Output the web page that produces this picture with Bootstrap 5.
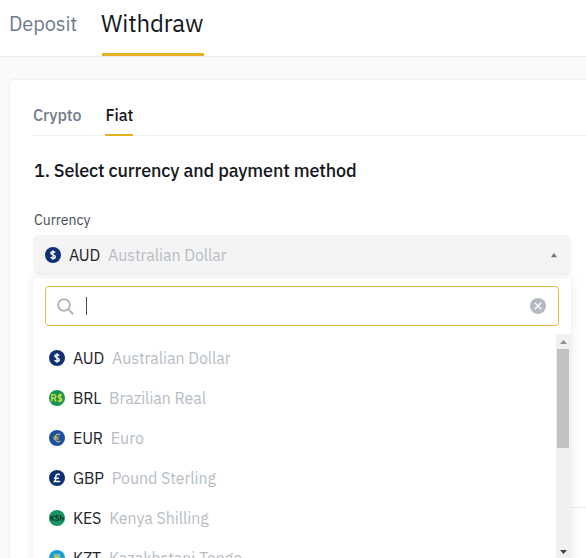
<!DOCTYPE html>
<html lang="en">
<head>
<meta charset="utf-8">
<meta name="viewport" content="width=device-width, initial-scale=1">
<title>Withdraw</title>
<link href="https://cdn.jsdelivr.net/npm/bootstrap@5.3.0/dist/css/bootstrap.min.css" rel="stylesheet">
<style>
body{font-family:"IBM Plex Sans",Roboto,sans-serif;background:#fafafa;color:#1e2329;height:558px;overflow:hidden}
.topbar{height:57px;border-bottom:1px solid #ececec;padding-left:10px;gap:24px}
.topbar a{height:56px;text-decoration:none;white-space:nowrap;border-bottom:3px solid transparent}
.t-dep{font-size:20px;line-height:47px;color:#707a8a;width:68px;letter-spacing:-.1px;text-indent:-1px}
.t-wit{font-size:24px;line-height:47px;color:#14181d;width:102px;letter-spacing:-.12px;text-indent:-1px}
.topbar a.active{border-color:#e3b11f}
.panel{margin:22px 0 0 9px;height:479px;overflow:hidden;border:1px solid #f0f0f0;border-right:0;border-bottom:0;border-radius:5px 0 0 0;padding:0 0 0 23px;box-shadow:0 0 3px rgba(0,0,0,.03)}
.subtabs{height:56px;border-bottom:1px solid #f0f0f0;gap:24px;font-size:16px;font-weight:500;letter-spacing:-.05px}
.subtabs a{height:56px;padding-top:23px;line-height:24px;text-decoration:none;color:#707a8a;border-bottom:2px solid transparent}
.subtabs a.active{color:#14181d;border-color:#e3b11f}
.step-title{font-size:18px;line-height:24px;font-weight:500;color:#14181d;margin:23px 0 0 1px;letter-spacing:-.155px}
.field-label{font-size:14px;line-height:20px;color:#474d57;margin:27px 0 0 1px}
.picker{width:538px;position:relative}
.picked{height:40px;margin-top:5px;border-radius:5px;background:#f4f4f4;padding:0 12px}
.coin{width:16px;height:16px;flex:none;margin-right:8px}
.code{font-size:16px;color:#1e2329;margin-right:8px;letter-spacing:-.2px}
.cname{font-size:16px;color:#b7bdc6;white-space:nowrap;letter-spacing:-.05px}
.drop{top:43px;left:0;width:538px;height:300px;border-radius:5px;box-shadow:0 0 10px rgba(20,21,26,.1);z-index:2}
.search{height:40px;margin:8px 12px 8px;border:1px solid #e0bc42;border-radius:4px;padding:0 12px 0 11px}
.caret{width:1px;height:18px;background:#474d57;margin-left:12px}
.opts{flex:1;padding-left:16px;padding-top:4px}
.opt{height:40px}
.bar{width:15px;height:240px;background:#f0f0f0}
.thumb{width:12px;height:99px;background:#c1c1c1;margin-left:1px}
.rule{height:1px;background:#eee;margin-top:232px}
</style>
</head>
<body>
<svg class="d-none">
<defs>
<symbol id="usd" viewBox="0 0 16 16"><circle cx="8" cy="8" r="8" fill="#0f3173"/><path d="M10.2 5.700C9.800 5 9 4.700 8 4.700c-1.300 0-2.100.6-2.100 1.500C5.900 8.300 10.300 7.300 10.300 9.700c0 1-.9 1.600-2.200 1.600-1.200 0-2-.4-2.500-1.200M8 3.200v9.600" fill="none" stroke="#fff" stroke-width="1.400"/></symbol>
<symbol id="brl" viewBox="0 0 16 16"><circle cx="8" cy="8" r="8" fill="#159454"/><path d="M2.800 11.600V4.700h2c2.700 0 2.700 3.500 0 3.500h-2M5 8.200l2.100 3.400M13 5.800c-.4-.7-1-.9-1.900-.9-2.400 0-2.600 2.600-.2 3.100 2.700.5 2.600 3.300.1 3.300-1.100 0-1.900-.4-2.300-1.100M11 3.600v8.900" fill="none" stroke="#cfdf3a" stroke-width="1.300"/></symbol>
<symbol id="eur" viewBox="0 0 16 16"><circle cx="8" cy="8" r="8" fill="#1d50a2"/><path d="M11.200 5C8.800 3 6.100 4.600 6.100 8s2.700 5 5.100 3M4.500 7.200h5.200M4.500 8.900h5.200" fill="none" stroke="#c6b65e" stroke-width="1.200"/></symbol>
<symbol id="gbp" viewBox="0 0 16 16"><circle cx="8" cy="8" r="8" fill="#0f3173"/><path d="M10.700 5.300C10 3.500 6.800 3.700 6.800 6.200c0 2 .8 3.200-1.300 5.300h5.700M5 8.200h4.900" fill="none" stroke="#fff" stroke-width="1.500"/></symbol>
<symbol id="kes" viewBox="0 0 16 16"><circle cx="8" cy="8" r="8" fill="#159461"/><path d="M1.900 5.400v5.200M5.300 5.400 2.400 8l3.100 2.600M9.700 6.200c-.8-.8-3-.7-3 .6 0 1.600 3.200.8 3.200 2.300 0 1.400-2.500 1.600-3.500.6M11.500 5v5.600M11.500 8.200c.6-1.100 2.600-1 2.600.4v2" fill="none" stroke="#0c3b2b" stroke-width="1.200"/></symbol>
<symbol id="kzt" viewBox="0 0 16 16"><circle cx="8" cy="8" r="8" fill="#149fda"/><path d="M4.800 4.800h6.400M4.800 7h6.400M8 7v5.500" fill="none" stroke="#d2d45b" stroke-width="1.300"/></symbol>
</defs>
</svg>
<nav class="topbar d-flex bg-white">
<a class="t-dep" href="#">Deposit</a><a class="t-wit active" href="#">Withdraw</a>
</nav>
<main class="panel bg-white">
<div class="subtabs d-flex"><a href="#">Crypto</a><a href="#" class="active">Fiat</a></div>
<h1 class="step-title">1. Select currency and payment method</h1>
<div class="field-label">Currency</div>
<div class="picker">
<div class="picked d-flex align-items-center">
<svg class="coin"><use href="#usd"/></svg><span class="code">AUD</span><span class="cname">Australian Dollar</span>
<svg class="ms-auto" width="10" height="6" viewBox="0 0 10 6"><path d="M2 5.200 5 1l3 4.200z" fill="#707580"/></svg>
</div>
<div class="drop position-absolute bg-white">
<div class="search d-flex align-items-center">
<svg width="17" height="17" viewBox="0 0 17 17" fill="none" stroke="#b2b7bf" stroke-width="2"><circle cx="7" cy="7" r="5.800"/><path d="m11.200 11.200 5 5"/></svg>
<span class="caret"></span>
<svg class="ms-auto" width="16" height="16" viewBox="0 0 16 16"><circle cx="8" cy="8" r="8" fill="#b2b9c3"/><path d="m4.800 4.800 6.400 6.400m0-6.400-6.400 6.400" stroke="#fff" stroke-width="1.400"/></svg>
</div>
<div class="d-flex">
<div class="opts">
<div class="opt d-flex align-items-center"><svg class="coin"><use href="#usd"/></svg><span class="code">AUD</span><span class="cname">Australian Dollar</span></div>
<div class="opt d-flex align-items-center"><svg class="coin"><use href="#brl"/></svg><span class="code">BRL</span><span class="cname">Brazilian Real</span></div>
<div class="opt d-flex align-items-center"><svg class="coin"><use href="#eur"/></svg><span class="code">EUR</span><span class="cname">Euro</span></div>
<div class="opt d-flex align-items-center"><svg class="coin"><use href="#gbp"/></svg><span class="code">GBP</span><span class="cname">Pound Sterling</span></div>
<div class="opt d-flex align-items-center"><svg class="coin"><use href="#kes"/></svg><span class="code">KES</span><span class="cname">Kenya Shilling</span></div>
<div class="opt d-flex align-items-center"><svg class="coin"><use href="#kzt"/></svg><span class="code">KZT</span><span class="cname">Kazakhstani Tenge</span></div>
</div>
<div class="bar">
<svg class="d-block" width="14" height="15"><path d="M4 10h7L7.500 6z" fill="#929292"/></svg>
<div class="thumb"></div>
<svg class="d-block" width="14" height="110"><path d="M4 102h7l-3.500 4z" fill="#404040"/></svg>
</div>
</div>
</div>
</div>
<div class="rule"></div>
</main>
<script src="https://cdn.jsdelivr.net/npm/bootstrap@5.3.0/dist/js/bootstrap.bundle.min.js"></script>
</body>
</html>
